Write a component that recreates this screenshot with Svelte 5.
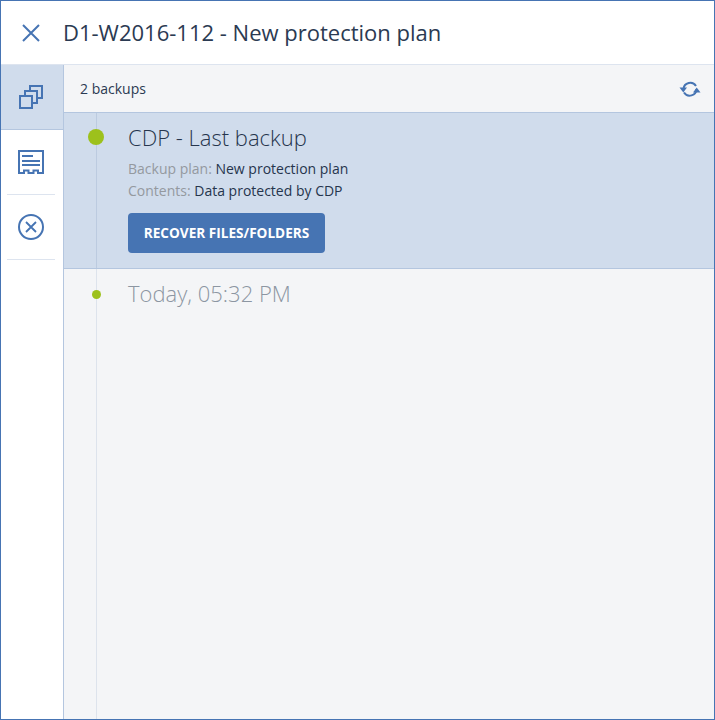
<script>
  const backups = [
    { label: 'Today, 05:32 PM' }
  ];
</script>

<div class="frame">
  <header class="top">
    <button class="close" aria-label="Close">
      <svg width="20" height="20" viewBox="0 0 20 20"><path d="M2 2 L18 18 M18 2 L2 18" fill="none" stroke="#4674b3" stroke-width="2" /></svg>
    </button>
    <h1>D1-W2016-112 - New protection plan</h1>
  </header>

  <div class="body">
    <nav class="side">
      <div class="tab active">
        <svg width="24" height="24" viewBox="0 0 24 24" fill="none" stroke="#4674b3" stroke-width="2">
          <path d="M11 5 V1 H23 V13 H19" />
          <path d="M6 10 V6 H18 V18 H14" />
          <rect x="1" y="11" width="12" height="12" />
        </svg>
      </div>
      <div class="tab plain">
        <svg width="26" height="24" viewBox="0 0 26 24" fill="none" stroke="#4674b3" stroke-width="2">
          <path d="M1 1 H25 V23 H20 V20.500 H15.500 V23 H10.500 V20.500 H6 V23 H1 Z" />
          <path d="M4 6 H15 M4 11 H22 M4 15 H22" />
        </svg>
      </div>
      <div class="tab plain">
        <svg width="26" height="26" viewBox="0 0 26 26" fill="none" stroke="#4674b3">
          <circle cx="13" cy="13" r="12" stroke-width="2" />
          <path d="M8 8 L18 18 M18 8 L8 18" stroke-width="1.800" />
        </svg>
      </div>
    </nav>

    <main class="content">
      <div class="bar">
        <span>2 backups</span>
        <svg class="refresh" width="22" height="18" viewBox="0 0 22 18" fill="none" stroke="#4674b3" stroke-width="2">
          <path d="M4.500 9 A6.800 6.800 0 0 1 17 6" />
          <path d="M17.500 9 A6.800 6.800 0 0 1 5 12.500" />
          <path d="M0.500 7.500 H8 L4.300 12.500 Z" fill="#4674b3" stroke="none" />
          <path d="M14 12.500 H21.500 L17.700 7.500 Z" fill="#4674b3" stroke="none" />
        </svg>
      </div>

      <div class="list">
        <div class="line"></div>

        <section class="item selected">
          <span class="dot big"></span>
          <h2>CDP - Last backup</h2>
          <p><span class="key">Backup plan:</span> New protection plan</p>
          <p><span class="key">Contents:</span> Data protected by CDP</p>
          <button class="recover">RECOVER FILES/FOLDERS</button>
        </section>

        {#each backups as b}
          <section class="item">
            <span class="dot"></span>
            <h2 class="muted">{b.label}</h2>
          </section>
        {/each}
      </div>
    </main>
  </div>
</div>

<style>
  :global(body) {
    margin: 0;
  }

  .frame {
    box-sizing: border-box;
    width: 715px;
    height: 720px;
    border: 1px solid #4674b3;
    display: flex;
    flex-direction: column;
    background: #fff;
    font-family: "Open Sans", sans-serif;
    color: #26354d;
    overflow: hidden;
  }

  .top {
    height: 63px;
    flex: none;
    display: flex;
    align-items: center;
    border-bottom: 1px solid #dde4ef;
    box-sizing: content-box;
  }

  .close {
    width: 60px;
    height: 40px;
    margin-right: 2px;
    padding: 0;
    border: 0;
    background: none;
    display: flex;
    align-items: center;
    justify-content: center;
  }

  h1 {
    margin: 0 0 2px;
    font-size: 22px;
    font-weight: 400;
    color: #2b3a52;
  }

  .body {
    flex: 1;
    display: flex;
    min-height: 0;
  }

  .side {
    width: 62px;
    flex: none;
    border-right: 1px solid #b4c6df;
    display: flex;
    flex-direction: column;
  }

  .tab {
    display: flex;
    align-items: center;
    justify-content: center;
  }

  .tab.active {
    height: 64px;
    padding-right: 2px;
    background: #d0dcec;
    border-bottom: 1px solid #b4c6df;
  }

  .tab.plain {
    height: 64px;
    margin: 0 8px 0 6px;
    border-bottom: 1px solid #dde4ef;
  }

  .content {
    flex: 1;
    display: flex;
    flex-direction: column;
    background: #f4f5f7;
    min-width: 0;
  }

  .bar {
    height: 47px;
    flex: none;
    display: flex;
    align-items: center;
    justify-content: space-between;
    padding: 0 13px 0 16px;
    font-size: 14px;
    color: #2b3a52;
    border-bottom: 1px solid #b4c6df;
  }

  .list {
    flex: 1;
    position: relative;
  }

  .line {
    position: absolute;
    left: 32px;
    top: 0;
    bottom: 0;
    width: 1px;
    background: #dde3ec;
  }

  .item {
    position: relative;
    padding: 9px 16px 8px 64px;
  }

  .item.selected {
    height: 156px;
    box-sizing: border-box;
    padding-bottom: 0;
    background: #d0dcec;
    border-bottom: 1px solid #b4c6df;
  }

  .selected::before {
    content: "";
    position: absolute;
    left: 32px;
    top: 0;
    bottom: 0;
    width: 1px;
    background: #bccbe0;
  }

  .dot {
    position: absolute;
    left: 28px;
    top: 21px;
    width: 9px;
    height: 9px;
    border-radius: 50%;
    background: #9dc11c;
  }

  .dot.big {
    left: 24px;
    top: 16px;
    width: 16px;
    height: 16px;
  }

  h2 {
    margin: 0 0 6px;
    font-size: 22px;
    line-height: 30px;
    font-weight: 300;
    color: #26354d;
  }

  h2.muted {
    color: #8c96a2;
  }

  p {
    margin: 0;
    font-size: 14px;
    line-height: 22px;
    color: #26354d;
  }

  .key {
    color: #94999f;
  }

  .recover {
    display: block;
    margin-top: 11px;
    width: 197px;
    height: 40px;
    padding: 0 0 2px;
    border: 0;
    border-radius: 4px;
    background: #4674b3;
    color: #fff;
    font: 700 13.6px "Open Sans", sans-serif;
  }
</style>
